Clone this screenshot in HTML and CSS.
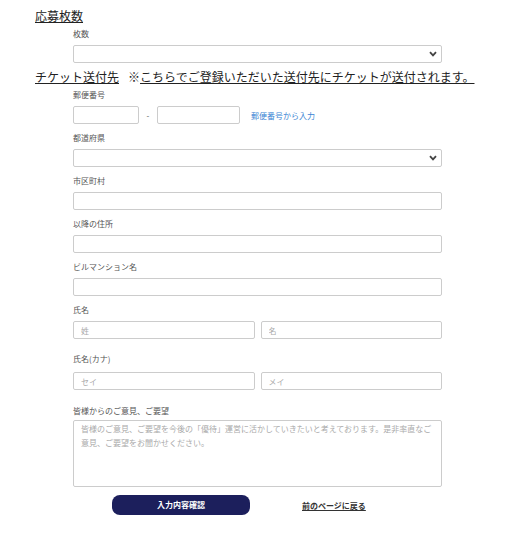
FILE: index.html
```html
<!DOCTYPE html>
<html>
<head>
	<title>応募フォーム</title>
	<meta charset="UTF-8">
	<link rel="stylesheet" href="styles.css">
</head>
<body>
	<div class="wrap">
		<!-- 応募枚数 -->
		<h2 class="secTitle"><span class="u">応募枚数</span></h2>
		<div class="field fieldFirst">
			<p class="label">枚数</p>
			<div class="selectBox">
				<select><option value=""></option></select>
				<svg class="arrow" width="8" height="6" viewBox="0 0 8 6"><path d="M1 1.2 L4 4.4 L7 1.2" fill="none" stroke="#444" stroke-width="1.8"/></svg>
			</div>
		</div>

		<!-- チケット送付先 -->
		<h2 class="secTitle secSend"><span class="u">チケット送付先</span><span class="note">※<span class="u">こちらでご登録いただいた送付先にチケットが送付されます。</span></span></h2>
		<div class="field fieldZip">
			<p class="label">郵便番号</p>
			<div class="zipRow">
				<input type="text" class="zip1">
				<span class="dash">-</span>
				<input type="text" class="zip2">
				<a href="javascript:;" class="zipLink">郵便番号から入力</a>
			</div>
		</div>
		<div class="field">
			<p class="label">都道府県</p>
			<div class="selectBox">
				<select><option value=""></option></select>
				<svg class="arrow" width="8" height="6" viewBox="0 0 8 6"><path d="M1 1.2 L4 4.4 L7 1.2" fill="none" stroke="#444" stroke-width="1.8"/></svg>
			</div>
		</div>
		<div class="field">
			<p class="label">市区町村</p>
			<input type="text" class="text">
		</div>
		<div class="field">
			<p class="label">以降の住所</p>
			<input type="text" class="text">
		</div>
		<div class="field">
			<p class="label">ビルマンション名</p>
			<input type="text" class="text">
		</div>
		<div class="field">
			<p class="label">氏名</p>
			<div class="nameRow">
				<input type="text" class="text" placeholder="姓">
				<input type="text" class="text" placeholder="名">
			</div>
		</div>
		<div class="field fieldKana">
			<p class="label">氏名(カナ)</p>
			<div class="nameRow">
				<input type="text" class="text" placeholder="セイ">
				<input type="text" class="text" placeholder="メイ">
			</div>
		</div>
		<div class="field fieldMsg">
			<p class="label">皆様からのご意見、ご要望</p>
			<textarea placeholder="皆様のご意見、ご要望を今後の「優待」運営に活かしていきたいと考えております。是非率直なご意見、ご要望をお聞かせください。"></textarea>
		</div>

		<div class="actions">
			<a href="javascript:;" class="btnConfirm">入力内容確認</a>
			<a href="javascript:;" class="back">前のページに戻る</a>
		</div>
	</div>
</body>
</html>
```

FILE: styles.css
```css
*{
	margin: 0;
	padding: 0;
	box-sizing: border-box;
}
a{
	text-decoration: none;
}
body{
	font-family: "Noto Sans CJK JP", "Noto Sans", sans-serif;
	color: #333;
	background: #fff;
}
.wrap{
	padding: 8px 0 0 35px;
}
.secTitle{
	font-size: 12px;
	line-height: 16px;
	font-weight: normal;
	color: #222;
}
.secSend{
	margin-top: 6px;
}
.u{
	text-decoration: underline;
}
.note{
	margin-left: 9px;
}
.field{
	width: 369px;
	margin: 8px 0 0 38px;
}
.fieldFirst{
	margin-top: 4px;
}
.fieldZip{
	margin-top: 4px;
}
.fieldKana{
	margin-top: 14px;
}
.fieldKana .label{
	margin-bottom: 7px;
}
.fieldMsg{
	margin-top: 15px;
}
.fieldMsg .label{
	margin-bottom: 3px;
}
.label{
	font-size: 8px;
	line-height: 12px;
	height: 12px;
	color: #555;
	margin-bottom: 5px;
}
input,
select,
textarea{
	font-family: "Noto Sans CJK JP", "Noto Sans", sans-serif;
	font-size: 8px;
	color: #333;
	background: #fff;
	border: 1px solid #ccc;
	border-radius: 2px;
	outline: none;
}
input::placeholder,
textarea::placeholder{
	color: #aaa;
}
.text{
	display: block;
	width: 100%;
	height: 18px;
	padding: 0 7px;
}
.selectBox{
	position: relative;
	height: 18px;
}
.selectBox select{
	display: block;
	width: 100%;
	height: 18px;
	padding: 0 7px;
	-webkit-appearance: none;
	appearance: none;
}
.selectBox .arrow{
	position: absolute;
	right: 5px;
	top: 6px;
}
.zipRow{
	display: flex;
	align-items: center;
}
.zipRow input{
	height: 18px;
	padding: 0 7px;
}
.zip1{
	width: 66px;
}
.zip2{
	width: 83px;
}
.dash{
	width: 18px;
	text-align: center;
	font-size: 8px;
	color: #555;
}
.zipLink{
	margin-left: 11px;
	font-size: 8px;
	color: #3d86d4;
}
.nameRow{
	display: grid;
	grid-template-columns: 1fr 1fr;
	column-gap: 6px;
}
textarea{
	display: block;
	width: 100%;
	height: 67px;
	padding: 1px 7px;
	line-height: 13.5px;
	resize: none;
}
.actions{
	display: flex;
	align-items: center;
	margin: 8px 0 0 77px;
}
.btnConfirm{
	width: 138px;
	height: 20px;
	line-height: 20px;
	border-radius: 8px;
	background: #1c1f5c;
	color: #fff;
	font-size: 8px;
	font-weight: bold;
	text-align: center;
}
.back{
	margin-left: 52px;
	font-size: 8px;
	font-weight: bold;
	color: #333;
	text-decoration: underline;
}
```
